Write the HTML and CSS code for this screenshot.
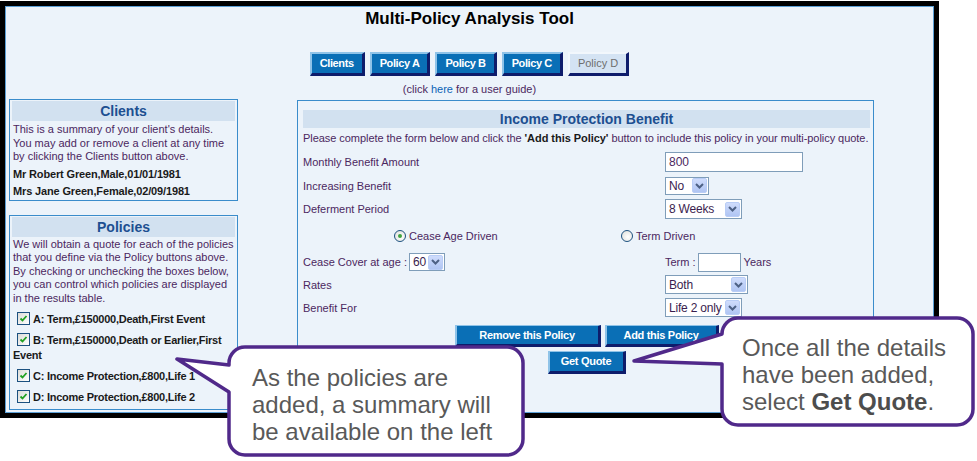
FILE: index.html
```html
<!DOCTYPE html>
<html>
<head>
<title>Multi-Policy Analysis Tool</title>
<meta http-equiv="content-type" content="text/html; charset=utf8">
<link rel="stylesheet" href="styles.css">
</head>
<body>
<div class="frame">
    <div class="title">Multi-Policy Analysis Tool</div>
    <div class="tabs">
        <span class="tab">Clients</span>
        <span class="tab">Policy A</span>
        <span class="tab">Policy B</span>
        <span class="tab">Policy C</span>
        <span class="tab off">Policy D</span>
    </div>
    <div class="guide">(click <a href="#">here</a> for a user guide)</div>

    <div class="main">
        <div class="side">
            <div class="box">
                <div class="box-head">Clients</div>
                <div class="box-text">This is a summary of your client's details.<br>
                You may add or remove a client at any time<br>
                by clicking the Clients button above.</div>
                <div class="person first">Mr Robert Green,Male,01/01/1981</div>
                <div class="person">Mrs Jane Green,Female,02/09/1981</div>
            </div>

            <div class="box policies">
                <div class="box-head">Policies</div>
                <div class="box-text">We will obtain a quote for each of the policies<br>
                that you define via the Policy buttons above.<br>
                By checking or unchecking the boxes below,<br>
                you can control which policies are displayed<br>
                in the results table.</div>
                <div class="policy first"><span class="check"><svg width="11" height="11" viewBox="0 0 11 11"><path d="M2.5 5.5 L4.5 7.5 L8.5 3" fill="none" stroke="#21a121" stroke-width="1.8"/></svg></span>A: Term,£150000,Death,First Event</div>
                <div class="policy"><span class="check"><svg width="11" height="11" viewBox="0 0 11 11"><path d="M2.5 5.5 L4.5 7.5 L8.5 3" fill="none" stroke="#21a121" stroke-width="1.8"/></svg></span>B: Term,£150000,Death or Earlier,First<br>Event</div>
                <div class="policy"><span class="check"><svg width="11" height="11" viewBox="0 0 11 11"><path d="M2.5 5.5 L4.5 7.5 L8.5 3" fill="none" stroke="#21a121" stroke-width="1.8"/></svg></span>C: Income Protection,£800,Life 1</div>
                <div class="policy"><span class="check"><svg width="11" height="11" viewBox="0 0 11 11"><path d="M2.5 5.5 L4.5 7.5 L8.5 3" fill="none" stroke="#21a121" stroke-width="1.8"/></svg></span>D: Income Protection,£800,Life 2</div>
            </div>
        </div>

        <div class="panel">
            <div class="panel-head">Income Protection Benefit</div>
            <div class="intro">Please complete the form below and click the <b>'Add this Policy'</b> button to include this policy in your multi-policy quote.</div>
            <div class="form">
                <div class="row">
                    <span class="label">Monthly Benefit Amount</span>
                    <span class="input amount">800</span>
                </div>
                <div class="row row-wide">
                    <span class="label">Increasing Benefit</span>
                    <span class="select sel-no"><span class="val">No</span><span class="arrow"><svg width="9" height="6" viewBox="0 0 9 6"><path d="M1 1 L4.5 4.5 L8 1" fill="none" stroke="#4d6185" stroke-width="2"/></svg></span></span>
                </div>
                <div class="row row-short">
                    <span class="label">Deferment Period</span>
                    <span class="select sel-weeks"><span class="val">8 Weeks</span><span class="arrow"><svg width="9" height="6" viewBox="0 0 9 6"><path d="M1 1 L4.5 4.5 L8 1" fill="none" stroke="#4d6185" stroke-width="2"/></svg></span></span>
                </div>
                <div class="row row-radio">
                    <span class="radio-opt first"><span class="radio on"></span>Cease Age Driven</span>
                    <span class="radio-opt"><span class="radio"></span>Term Driven</span>
                </div>
                <div class="row row-short">
                    <span class="label">Cease Cover at age : <span class="select sel-age"><span class="val">60</span><span class="arrow"><svg width="9" height="6" viewBox="0 0 9 6"><path d="M1 1 L4.5 4.5 L8 1" fill="none" stroke="#4d6185" stroke-width="2"/></svg></span></span></span>
                    <span class="term">Term : <span class="input years"></span> Years</span>
                </div>
                <div class="row">
                    <span class="label">Rates</span>
                    <span class="select sel-rates"><span class="val">Both</span><span class="arrow"><svg width="9" height="6" viewBox="0 0 9 6"><path d="M1 1 L4.5 4.5 L8 1" fill="none" stroke="#4d6185" stroke-width="2"/></svg></span></span>
                </div>
                <div class="row">
                    <span class="label">Benefit For</span>
                    <span class="select sel-life"><span class="val">Life 2 only</span><span class="arrow"><svg width="9" height="6" viewBox="0 0 9 6"><path d="M1 1 L4.5 4.5 L8 1" fill="none" stroke="#4d6185" stroke-width="2"/></svg></span></span>
                </div>
            </div>
            <div class="actions">
                <span class="btn remove">Remove this Policy</span>
                <span class="btn add">Add this Policy</span>
            </div>
            <div class="actions quote-row">
                <span class="btn quote">Get Quote</span>
            </div>
        </div>
    </div>
</div>

<div class="callout callout-left">
    <svg width="360" height="120" viewBox="0 0 360 120"><path d="M75 7 H337 A16 16 0 0 1 353 23 V99 A16 16 0 0 1 337 115 H75 A16 16 0 0 1 59 99 V52 L7 19 L59 25 V23 A16 16 0 0 1 75 7 Z" fill="#fff" stroke="#50298a" stroke-width="3.5" stroke-linejoin="round"/></svg>
    <div class="callout-text">As the policies are<br>added, a summary will<br>be available on the left</div>
</div>
<div class="callout callout-right">
    <svg width="349" height="120" viewBox="0 0 349 120"><path d="M110 8 H329 A16 16 0 0 1 345 24 V99 A16 16 0 0 1 329 115 H110 A16 16 0 0 1 94 99 V54 L6 51 L94 24 A16 16 0 0 1 110 8 Z" fill="#fff" stroke="#50298a" stroke-width="3.5" stroke-linejoin="round"/></svg>
    <div class="callout-text">Once all the details<br>have been added,<br>select <b>Get Quote</b>.</div>
</div>
</body>
</html>
```

FILE: styles.css
```css
body {
    margin: 0;
    height: 461px;
    overflow: hidden;
    position: relative;
    background: #fff;
    font-family: "Liberation Sans", Arial, sans-serif;
    font-size: 11px;
    color: #4b2760;
}
.frame {
    margin-top: 1px;
    width: 929px;
    height: 407px;
    border: 5px solid #000;
    background: #ecf3fa;
    box-shadow: inset 0 0 0 1px #5b9fd5;
    overflow: hidden;
}
.title {
    margin-top: 3px;
    line-height: 20px;
    text-align: center;
    font-size: 17px;
    font-weight: bold;
    color: #000;
}
.tabs {
    display: flex;
    justify-content: center;
    gap: 5px;
    margin-top: 23px;
}
.tab {
    height: 24px;
    box-sizing: border-box;
    padding: 0 8px;
    line-height: 19px;
    background: #0a6fb6;
    color: #fff;
    font-weight: bold;
    letter-spacing: -0.4px;
    border-top: 2px solid #8fc3e8;
    border-left: 2px solid #8fc3e8;
    border-right: 3px solid #0e1c6b;
    border-bottom: 3px solid #0e1c6b;
}
.tab.off {
    background: #d4e3f3;
    color: #6e6e6e;
    font-weight: normal;
    letter-spacing: 0;
    border-top-color: #f2f7fc;
    border-left-color: #f2f7fc;
}
.guide {
    margin-top: 6px;
    line-height: 14px;
    text-align: center;
}
.guide a {
    color: #0b63b5;
    text-decoration: none;
}
.main {
    display: flex;
    align-items: flex-start;
    margin-top: 3px;
}
.side {
    margin-left: 4px;
    width: 229px;
}
.box {
    border: 1px solid #3a8ccb;
    padding: 1px 2px 0;
}
.box.policies {
    margin-top: 14px;
    padding-bottom: 4px;
}
.box-head {
    height: 20px;
    line-height: 20px;
    background: #d2e1f0;
    text-align: center;
    font-size: 14px;
    font-weight: bold;
    color: #1d4f91;
}
.box-text {
    margin-top: 2px;
    padding-left: 1px;
    line-height: 13.5px;
    white-space: nowrap;
}
.policies .box-text {
    margin-top: 1px;
}
.person {
    padding-left: 1px;
    line-height: 17px;
    font-weight: bold;
    letter-spacing: -0.15px;
    color: #1a1a1a;
}
.person.first {
    margin-top: 2px;
}
.policy {
    margin-top: 6px;
    padding-left: 1px;
    line-height: 15px;
    font-weight: bold;
    letter-spacing: -0.25px;
    color: #1a1a1a;
}
.policy.first {
    margin-top: 7px;
}
.check {
    display: inline-block;
    width: 13px;
    height: 13px;
    box-sizing: border-box;
    margin: 0 3px 0 4px;
    vertical-align: -2px;
    border: 1px solid #1c5180;
    background: linear-gradient(135deg, #dcdcd7, #fff);
}
.check svg {
    display: block;
}
.panel {
    margin: 1px 0 0 59px;
    width: 577px;
    height: 330px;
    box-sizing: border-box;
    border: 1px solid #3a8ccb;
    padding: 9px 3px 0 5px;
}
.panel-head {
    height: 18px;
    line-height: 18px;
    background: #d2e1f0;
    text-align: center;
    font-size: 14px;
    font-weight: bold;
    color: #1d4f91;
}
.intro {
    margin-top: 3px;
    line-height: 14px;
    letter-spacing: -0.05px;
    white-space: nowrap;
}
.intro b {
    color: #1a1a1a;
}
.form {
    margin-top: 5px;
}
.row {
    display: flex;
    align-items: center;
    height: 23px;
    white-space: nowrap;
}
.row-wide {
    height: 25px;
}
.row-short {
    height: 22px;
}
.row-radio {
    height: 31px;
}
.label {
    display: flex;
    align-items: center;
    width: 362px;
    flex: none;
}
.input {
    display: inline-block;
    height: 20px;
    box-sizing: border-box;
    border: 1px solid #7f9db9;
    background: #fff;
    padding-left: 3px;
    font-size: 12px;
    line-height: 18px;
}
.amount {
    width: 138px;
}
.years {
    width: 43px;
    height: 19px;
    margin: 0 3px 0 2px;
}
.term {
    display: flex;
    align-items: center;
}
.select {
    display: inline-flex;
    align-items: center;
    height: 19px;
    box-sizing: border-box;
    border: 1px solid #7f9db9;
    background: #fff;
    font-size: 12px;
    color: #3a1d4e;
}
.select .val {
    flex: 1;
    padding-left: 3px;
    letter-spacing: -0.2px;
}
.select .arrow {
    display: flex;
    align-items: center;
    justify-content: center;
    width: 15px;
    height: 15px;
    margin-right: 1px;
    box-sizing: border-box;
    border: 1px solid #b9cdf6;
    border-radius: 2px;
    background: linear-gradient(#cfdcfc, #b0c5f3);
}
.sel-no {
    width: 44px;
    height: 18px;
}
.sel-weeks {
    width: 77px;
    height: 20px;
}
.sel-age {
    width: 36px;
    height: 18px;
    margin-left: 2px;
}
.sel-rates {
    width: 83px;
}
.sel-life {
    width: 77px;
}
.radio-opt {
    display: flex;
    align-items: center;
    gap: 3px;
}
.radio-opt.first {
    margin-left: 91px;
    width: 227px;
}
.radio {
    width: 12px;
    height: 12px;
    box-sizing: border-box;
    border-radius: 50%;
    border: 1px solid #1c5180;
    background: radial-gradient(circle at 60% 60%, #fff, #dcdcd7);
    display: flex;
    align-items: center;
    justify-content: center;
}
.radio.on::after {
    content: "";
    width: 4px;
    height: 4px;
    border-radius: 50%;
    background: #3fa33f;
}
.actions {
    display: flex;
    justify-content: center;
    gap: 4px;
    margin-top: 6px;
}
.quote-row {
    margin-top: 4px;
}
.btn {
    height: 22px;
    box-sizing: border-box;
    line-height: 18px;
    text-align: center;
    background: #0a6fb6;
    color: #fff;
    font-weight: bold;
    letter-spacing: -0.3px;
    border-top: 1px solid #8fc3e8;
    border-left: 2px solid #8fc3e8;
    border-right: 3px solid #0e1c6b;
    border-bottom: 3px solid #0e1c6b;
}
.remove {
    width: 146px;
}
.add {
    width: 114px;
}
.quote {
    width: 78px;
    height: 23px;
    line-height: 19px;
}
.callout {
    position: absolute;
}
.callout svg {
    display: block;
}
.callout-left {
    left: 170px;
    top: 340px;
}
.callout-right {
    left: 628px;
    top: 310px;
}
.callout-text {
    position: absolute;
    font-size: 24px;
    line-height: 27px;
    color: #595959;
    white-space: nowrap;
}
.callout-left .callout-text {
    left: 82px;
    top: 24px;
}
.callout-right .callout-text {
    left: 114px;
    top: 24px;
}
.callout-text b {
    color: #4d4d4d;
}
```
